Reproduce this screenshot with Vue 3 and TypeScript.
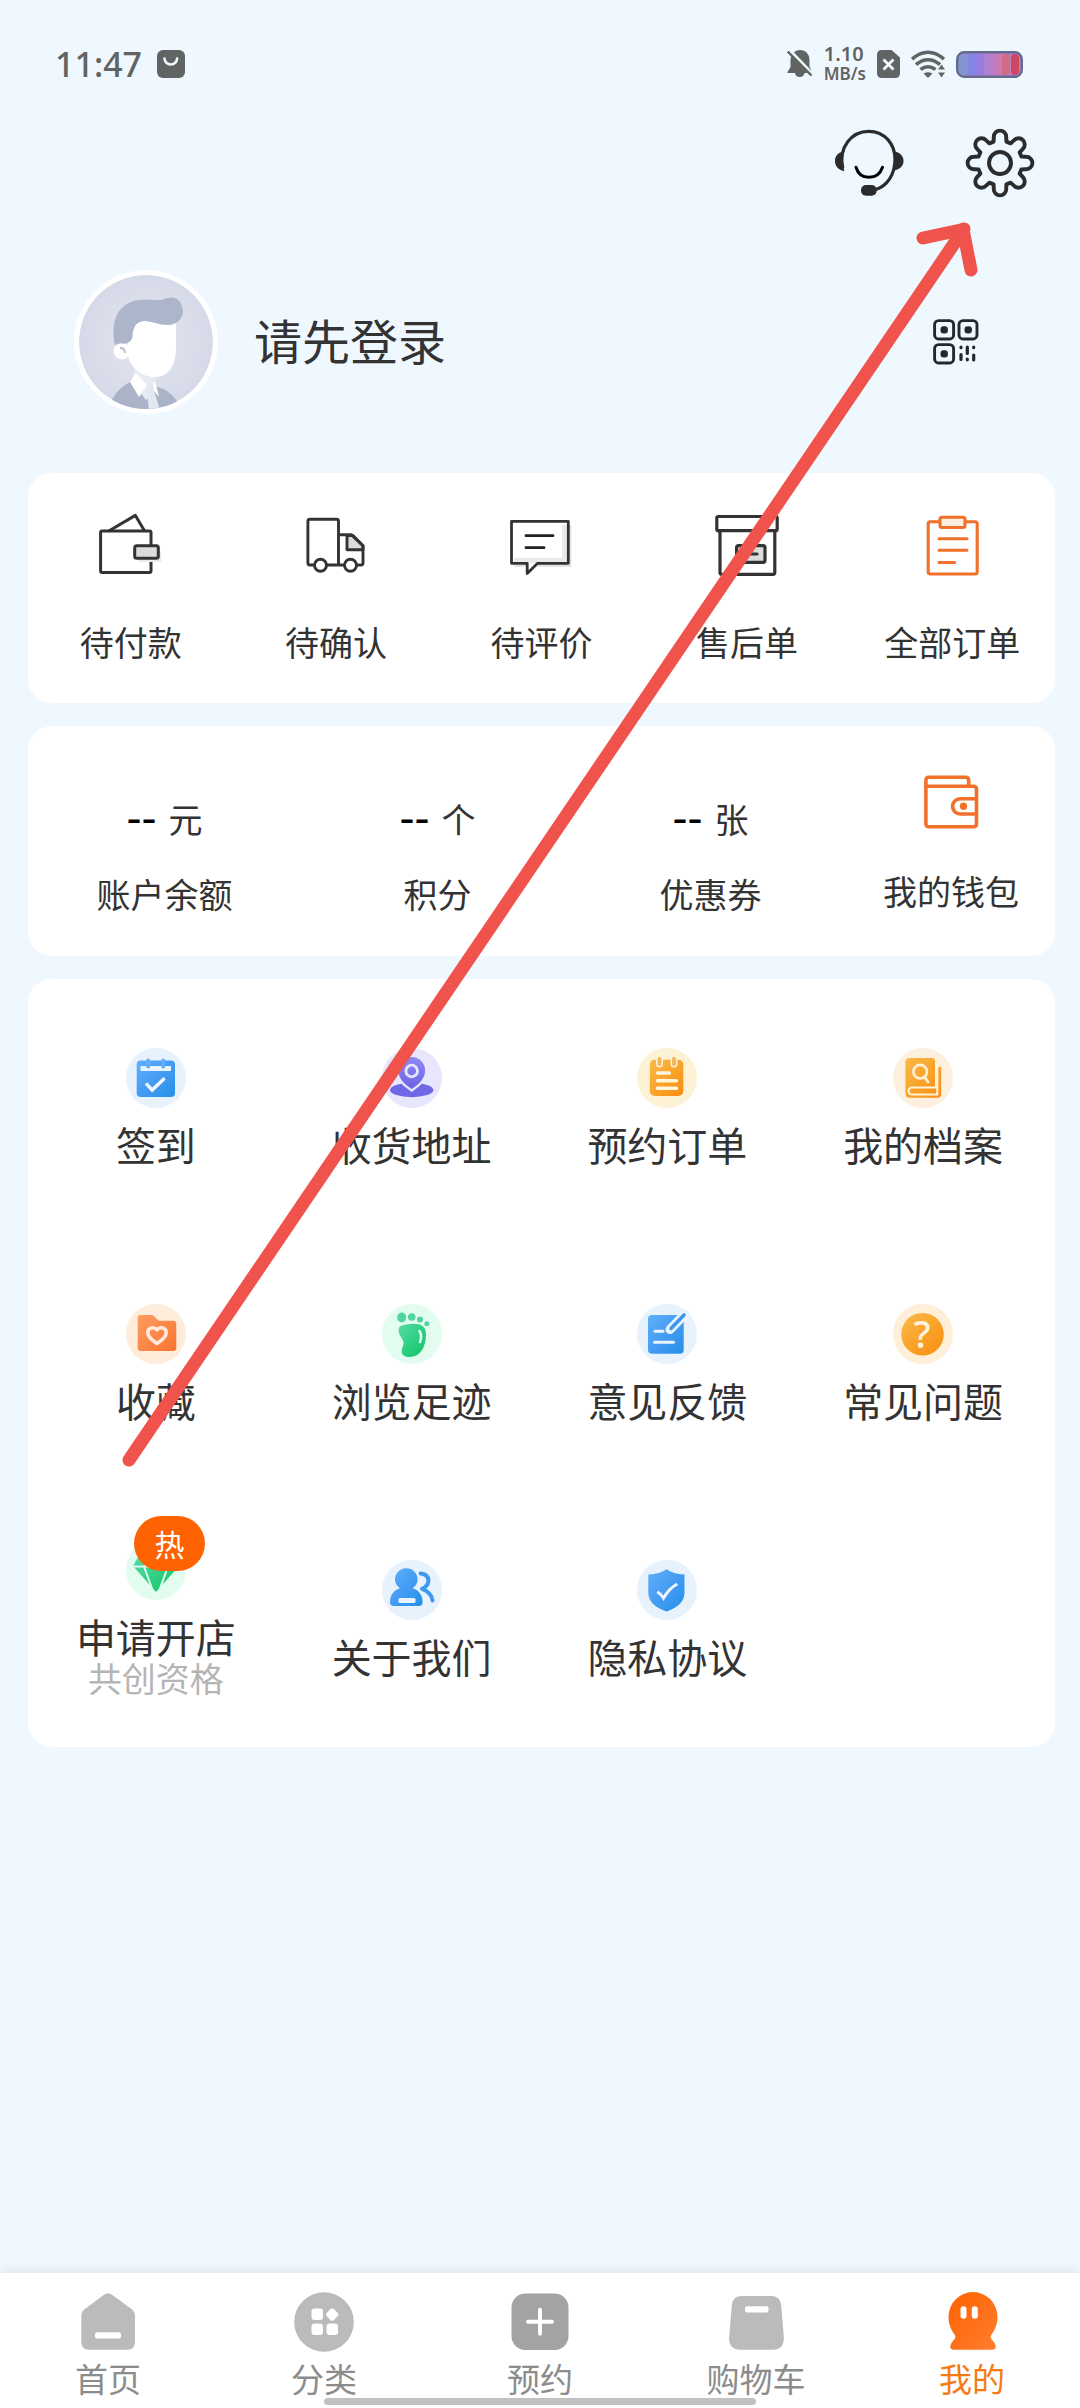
<script setup lang="ts">
interface Entry {
  label: string
  icon: string
  mark?: string
  note?: string
  badge?: string
}

interface Stat {
  unit: string
  label: string
}

const orders: Entry[] = [
  { label: '待付款', icon: 'pay' },
  { label: '待确认', icon: 'truck' },
  { label: '待评价', icon: 'comment' },
  { label: '售后单', icon: 'box' },
  { label: '全部订单', icon: 'clipboard' },
]

const stats: Stat[] = [
  { unit: '元', label: '账户余额' },
  { unit: '个', label: '积分' },
  { unit: '张', label: '优惠券' },
]

const services: Entry[] = [
  { label: '签到', icon: 'calendar' },
  { label: '收货地址', icon: 'pin' },
  { label: '预约订单', icon: 'notepad' },
  { label: '我的档案', icon: 'book' },
  { label: '收藏', icon: 'folder' },
  { label: '浏览足迹', icon: 'foot' },
  { label: '意见反馈', icon: 'feedback' },
  { label: '常见问题', icon: 'question', mark: '?' },
  { label: '申请开店', icon: 'diamond', note: '共创资格', badge: '热' },
  { label: '关于我们', icon: 'people' },
  { label: '隐私协议', icon: 'shield' },
]

const tabs: Entry[] = [
  { label: '首页', icon: 'home' },
  { label: '分类', icon: 'category' },
  { label: '预约', icon: 'plus' },
  { label: '购物车', icon: 'bag' },
  { label: '我的', icon: 'ghost' },
]

const activeTab = '我的'

// Outline of the settings gear: eight rounded lobes around the centre.
function gearPath(): string {
  const parts: string[] = []
  for (let i = 0; i < 8; i++) {
    const a = (i * Math.PI) / 4
    const at = (x: number, y: number): string =>
      `${(35 + x * Math.cos(a) - y * Math.sin(a)).toFixed(2)} ${(35 + x * Math.sin(a) + y * Math.cos(a)).toFixed(2)}`
    parts.push(`${i ? 'L' : 'M'}${at(-6.4, -21.4)}L${at(-6.2, -26.2)}A6.2 6.2 0 0 1 ${at(6.2, -26.2)}L${at(6.4, -21.4)}`)
  }
  return parts.join('') + 'Z'
}
const gear = gearPath()
</script>

<template>
  <div class="page">
    <svg class="sprite" aria-hidden="true">
      <defs>
        <linearGradient id="g-blue" x1="0" y1="0" x2="1" y2="1">
          <stop offset="0" stop-color="#5fb0fb" /><stop offset="0.5" stop-color="#459cf3" /><stop offset="1" stop-color="#2590e8" />
        </linearGradient>
        <linearGradient id="g-violet" x1="0" y1="0" x2="0" y2="1">
          <stop offset="0" stop-color="#9089f2" /><stop offset="1" stop-color="#6b63e4" />
        </linearGradient>
        <linearGradient id="g-amber" x1="0" y1="0" x2="1" y2="1">
          <stop offset="0" stop-color="#fcb84a" /><stop offset="0.5" stop-color="#f9a42a" /><stop offset="1" stop-color="#f98d12" />
        </linearGradient>
        <linearGradient id="g-orange" x1="0" y1="0" x2="1" y2="1">
          <stop offset="0" stop-color="#fd9d62" /><stop offset="1" stop-color="#fb7430" />
        </linearGradient>
        <linearGradient id="g-green" x1="0" y1="0" x2="1" y2="1">
          <stop offset="0" stop-color="#55dba4" /><stop offset="1" stop-color="#0cc464" />
        </linearGradient>
        <linearGradient id="g-me" x1="0" y1="0" x2="1" y2="1">
          <stop offset="0" stop-color="#ff6200" /><stop offset="1" stop-color="#ff7d30" />
        </linearGradient>
      </defs>

      <symbol id="i-pay" viewBox="0 0 64 64">
        <g fill="none" stroke="#333" stroke-width="3" stroke-linejoin="round">
          <rect x="1.600" y="18" width="50.400" height="41.400" rx="1.500" />
          <path d="M9.800 18 36.400 2.400 45.600 18" />
          <rect x="40" y="38" width="22" height="11" rx="1" fill="#e9e9e9" stroke="none" />
          <rect x="35.700" y="32.700" width="23.600" height="12.600" rx="2" fill="#dcdcdc" />
        </g>
      </symbol>
      <symbol id="i-truck" viewBox="0 0 64 64">
        <g fill="none" stroke="#333" stroke-width="2.900" stroke-linejoin="round">
          <path d="M43 22.500V36.700h16v-4L49 22.500z" fill="#dcdcdc" />
          <path d="M34.500 21.700H47.300L59 32.700V50q0 2-2 2H5.900q-2 0-2-2V8.300q0-2 2-2H32.500q2 0 2 2V52" />
          <circle cx="16.500" cy="52.300" r="6" fill="#fff" />
          <circle cx="46.500" cy="52.300" r="6" fill="#fff" />
        </g>
      </symbol>
      <symbol id="i-comment" viewBox="0 0 64 64">
        <path d="M59 12h2.500v42H27l2-3.500h30zM4 51.500h12V54H4z" fill="#e3e3e3" />
        <path d="M52 12h6v38H4v-5h48z" fill="#e9e9e9" />
        <path d="M1.500 8.300H58.300V50.300H27.600L17.200 60.500V50.300H1.500z" fill="none" stroke="#333" stroke-width="2.800" stroke-linejoin="round" />
        <path d="M16 22.700H43M16 34.700H34" fill="none" stroke="#222" stroke-width="2.800" stroke-linecap="round" />
      </symbol>
      <symbol id="i-box" viewBox="0 0 64 64">
        <g fill="none" stroke="#333" stroke-width="3.200" stroke-linejoin="round">
          <path d="M5 17.700V59.500q0 1.800 1.800 1.800H58q1.800 0 1.800-1.800V17.700" />
          <rect x="1.800" y="3.500" width="60.400" height="14.200" rx="1.500" />
          <rect x="21.600" y="32.700" width="28.400" height="16.600" rx="2" fill="#dcdcdc" />
          <path d="M28 41H42" stroke-linecap="round" />
        </g>
      </symbol>
      <symbol id="i-clipboard" viewBox="0 0 64 64">
        <g fill="none" stroke="#f1702a" stroke-width="3.100" stroke-linejoin="round" stroke-linecap="round">
          <rect x="8.200" y="8.700" width="49" height="52.300" rx="2" />
          <rect x="20" y="4.300" width="25" height="10.200" rx="2" fill="#fdeee2" />
          <path d="M19 25.700H47M19 37.300H47M19 49.500H34.600" />
        </g>
      </symbol>
      <symbol id="i-wallet" viewBox="0 0 64 64">
        <g fill="none" stroke="#f1702a" stroke-width="3.600" stroke-linejoin="round">
          <path d="M6.900 20.300V14.500q0-3.200 3.200-3.200H46.500q3.200 0 3.200 3.200V20.300" />
          <path d="M6.900 20.300H54.500q3 0 3 3V57.700q0 3-3 3H9.900q-3 0-3-3z" />
          <path d="M57.500 32.700H41.200a7.650 7.650 0 0 0 0 15.300H57.500" />
        </g>
        <circle cx="44.500" cy="40.300" r="3.700" fill="#f1702a" />
      </symbol>

      <symbol id="i-calendar" viewBox="0 0 60 60">
        <circle cx="30" cy="30" r="30" fill="#e7f2fd" />
        <rect x="10.700" y="12.500" width="38.300" height="36.500" rx="4" fill="url(#g-blue)" />
        <rect x="14.500" y="18" width="30.500" height="5" fill="#e9f4fe" />
        <path d="M22.200 12.500v6M37.300 12.500v6" stroke="#62aef8" stroke-width="4" stroke-linecap="round" />
        <path d="M20 35.300 26.200 42 38.600 30.300" fill="none" stroke="#f1f8ff" stroke-width="3.400" />
      </symbol>
      <symbol id="i-pin" viewBox="0 0 60 60">
        <circle cx="30" cy="30" r="30" fill="#e7e6fd" />
        <ellipse cx="29.700" cy="42" rx="21.700" ry="7.200" fill="#6f67e6" />
        <path d="M29.700 41C22 36 16.300 30 16.300 22.500a13.400 13.400 0 0 1 26.800 0C43.100 30 37.500 36 29.700 41z" fill="url(#g-violet)" stroke="#e7e6fd" stroke-width="5" paint-order="stroke" />
        <circle cx="29.700" cy="23" r="5.800" fill="none" stroke="#e7e6fd" stroke-width="2.800" />
      </symbol>
      <symbol id="i-notepad" viewBox="0 0 60 60">
        <circle cx="30" cy="30" r="30" fill="#fdf3d4" />
        <rect x="12.800" y="11.700" width="33.500" height="36.300" rx="5" fill="url(#g-amber)" />
        <path d="M22.500 11v5M37 11v5" stroke="#fdf3d4" stroke-width="7" stroke-linecap="round" />
        <path d="M22.500 11v5M37 11v5" stroke="#f5b55a" stroke-width="4" stroke-linecap="round" />
        <path d="M20.500 25H32.500M20.500 32.700H39.500M20.500 40.200H39.500" stroke="#fff6dc" stroke-width="3.400" stroke-linecap="round" />
      </symbol>
      <symbol id="i-book" viewBox="0 0 60 60">
        <circle cx="30" cy="30" r="30" fill="#fdf0dc" />
        <path d="M17 10H39q3 0 3 3V39H45V20a1.500 1.500 0 0 1 3.200 0V46q0 3.800-3.800 3.800H17q-4.600 0-4.600-4.600V14.500q0-4.500 4.600-4.500z" fill="url(#g-amber)" />
        <path d="M44.300 14V39.500H19a3.500 3.500 0 0 0 0 7H44.300V38" fill="none" stroke="#fff0d8" stroke-width="2.200" />
        <circle cx="27.200" cy="23.700" r="6.800" fill="none" stroke="#fff0d8" stroke-width="2.600" />
        <path d="M31.500 29 35 34" stroke="#fff0d8" stroke-width="2.800" stroke-linecap="round" />
      </symbol>
      <symbol id="i-folder" viewBox="0 0 60 60">
        <circle cx="30" cy="30" r="30" fill="#feeddb" />
        <path d="M14.500 11H25.500q1.500 0 2.500 1l4.500 4.700H47q3.300 0 3.300 3.300V44q0 3-3 3H14.700q-3 0-3-3V14q0-3 2.800-3z" fill="url(#g-orange)" />
        <path d="M31 39.500C25 35.500 21.800 32.500 21.800 28.700c0-5 6-6.500 9.200-2.800 3.200-3.700 9.200-2.200 9.200 2.800 0 3.800-3.200 6.800-9.200 10.800z" fill="none" stroke="#ffe9d8" stroke-width="3.600" stroke-linejoin="round" />
      </symbol>
      <symbol id="i-foot" viewBox="0 0 60 60">
        <circle cx="30" cy="30" r="30" fill="#e2fdf0" />
        <g fill="#4fd69e">
          <ellipse cx="19.700" cy="13.500" rx="4.500" ry="5" />
          <circle cx="29.700" cy="13" r="3.800" />
          <circle cx="38" cy="15.500" r="3" />
          <circle cx="44.800" cy="19.700" r="2.500" />
        </g>
        <path d="M16.600 26C16.600 21.500 21 20.500 29 20c9-.8 15 2 15 10 0 9-3 23-17 23-8 0-8.500-6-6-11 1.500-3.500 0-5.500-1.500-8-1.500-2.700-2.900-4.500-2.900-8z" fill="url(#g-green)" />
        <path d="M37.500 27q3 5 .5 11" fill="none" stroke="#e2fdf0" stroke-width="2.600" stroke-linecap="round" />
      </symbol>
      <symbol id="i-feedback" viewBox="0 0 60 60">
        <circle cx="30" cy="30" r="30" fill="#e7f2fd" />
        <rect x="11" y="11" width="35.700" height="38.800" rx="4" fill="url(#g-blue)" />
        <path d="M33 25.500 48 10" stroke="#e9f4fe" stroke-width="9" stroke-linecap="round" />
        <path d="M34 24.500 47 11" stroke="#3f97ee" stroke-width="3.600" stroke-linecap="round" />
        <path d="M18 27.300H26" stroke="#e9f4fe" stroke-width="3" stroke-linecap="round" />
        <path d="M17.500 38.200H36.500" stroke="#e9f4fe" stroke-width="3" stroke-linecap="round" />
      </symbol>
      <symbol id="i-question" viewBox="0 0 60 60">
        <circle cx="30" cy="30" r="30" fill="#feefd8" />
        <circle cx="29.500" cy="30.300" r="21.300" fill="url(#g-amber)" />
      </symbol>
      <symbol id="i-diamond" viewBox="0 0 60 60">
        <circle cx="30" cy="30" r="30" fill="#e2fdf0" />
        <path d="M12 17H48L53 26 30 52 7 26z" fill="url(#g-green)" />
        <path d="M6 26.500H54M18 26.500 26.500 50M42 26.500 33.500 50M18 26.500 24 17M42 26.500 36 17" fill="none" stroke="#e2fdf0" stroke-width="2" />
      </symbol>
      <symbol id="i-people" viewBox="0 0 60 60">
        <circle cx="30" cy="30" r="30" fill="#e7f2fd" />
        <path d="M8 42C8 34 13 29.500 18 28.200 14.500 26 13 22.500 13 19.500a11.300 11.300 0 0 1 22.600 0c0 3-1.500 6.500-5 8.700 5 1.300 10 5.800 10 13.800q0 4-3.600 4H11.600Q8 46 8 42z" fill="url(#g-blue)" />
        <rect x="16.500" y="38" width="17" height="5" rx="1.500" fill="#e9f4fe" />
        <path d="M38.500 13.500c10 1 10.500 11.500 1.500 15.300C47 31.500 50 35 50.500 40.500" fill="none" stroke="#3f99f0" stroke-width="4" stroke-linecap="round" stroke-linejoin="round" />
      </symbol>
      <symbol id="i-shield" viewBox="0 0 60 60">
        <circle cx="30" cy="30" r="30" fill="#e7f2fd" />
        <path d="M29.500 9.300Q36 14 47.500 14.500V33C47.500 43 38 48.500 29.500 51.500 21 48.500 11.300 43 11.300 33V14.500Q23 14 29.500 9.300z" fill="url(#g-blue)" />
        <path d="M20.300 31.700Q24 34 26.500 38 32 28.500 40.300 24" fill="none" stroke="#f1f8ff" stroke-width="3" />
      </symbol>

      <symbol id="i-home" viewBox="0 0 60 60">
        <path d="M26 2.800q4-3 8 0L53.500 17q3.500 2.600 3.500 7V49.700q0 8-8 8H11.300q-8 0-8-8V24q0-4.400 3.500-7z" fill="#bbb" />
        <rect x="17" y="40.300" width="26" height="6.200" rx="2" fill="#fff" />
      </symbol>
      <symbol id="i-category" viewBox="0 0 60 60">
        <circle cx="30" cy="30" r="29.800" fill="#bbb" />
        <g fill="#fff">
          <rect x="17.500" y="16.500" width="11.500" height="11.500" rx="3" />
          <rect x="17.500" y="31.500" width="11.500" height="11.500" rx="3" />
          <rect x="32.500" y="31.500" width="11.500" height="11.500" rx="3" />
          <rect x="33.200" y="17.500" width="10" height="10" rx="2" transform="rotate(45 38.200 22.500)" />
        </g>
      </symbol>
      <symbol id="i-plus" viewBox="0 0 60 60">
        <rect x="1.500" y="1.500" width="57" height="56.500" rx="14" fill="#a3a3a3" />
        <path d="M18 29.700H42M30 17.700V41.700" stroke="#fff" stroke-width="4" stroke-linecap="round" />
      </symbol>
      <symbol id="i-bag" viewBox="0 0 60 60">
        <path d="M16 4H45q9.300 0 10.200 9L57.800 45q.6 12.700-11 12.700H14.200Q2.600 57.700 3.200 45L5.800 13Q6.700 4 16 4z" fill="#bbb" />
        <rect x="19" y="14.300" width="23.500" height="6.200" rx="2" fill="#fff" />
      </symbol>
      <symbol id="i-ghost" viewBox="0 0 60 60">
        <path d="M31 0a24.500 25 0 0 1 24.500 25c0 8-3.500 14-6.300 18-1.100 1.600-.6 3 .6 4.500C55.500 54 54.500 57.700 50 57.700H12C7.500 57.700 6.500 54 12.200 47.500c1.200-1.500 1.700-2.900.6-4.500C10 39 6.500 33 6.500 25A24.500 25 0 0 1 31 0z" fill="url(#g-me)" />
        <path d="M21.500 17.300v6.400M32.800 17.300v6.400" stroke="#fff" stroke-width="6" stroke-linecap="round" />
      </symbol>
    </svg>

    <header class="status">
      <div class="status-side">
        <span class="clock">11:47</span>
        <svg width="28" height="28" viewBox="0 0 28 28">
          <rect width="28" height="28" rx="6" fill="#606463" />
          <path d="M7.500 8.500a6.300 6 0 0 0 12.600 0" fill="none" stroke="#f0f8ff" stroke-width="2.600" stroke-linecap="round" />
        </svg>
      </div>
      <div class="status-side tight">
        <svg width="26" height="28" viewBox="0 0 26 28">
          <path d="M3.500 9C4.500 3 9 0 13 0c6 0 9.500 4.500 9.500 10v6.500L25 22v1H17.500a4.800 4.800 0 0 1-9.500 0H.5v-1L3.500 17z" fill="#606463" />
          <path d="M2.500 0 26 24.500" stroke="#f0f8ff" stroke-width="3" />
          <path d="M.8 1.500 24.500 25.500" stroke="#606463" stroke-width="2.400" />
        </svg>
        <div class="speed"><span class="rate">1.10</span><span class="unit">MB/s</span></div>
        <svg width="23" height="28" viewBox="0 0 23 28">
          <path d="M5 0H14.500L23 7.500V23q0 5-5 5H5q-5 0-5-5V5Q0 0 5 0z" fill="#606463" />
          <path d="M6.500 9.500 16.500 19.500M16.500 9.500 6.500 19.500" stroke="#f0f8ff" stroke-width="2.800" />
        </svg>
        <svg width="34" height="28" viewBox="0 0 34 28">
          <g fill="none" stroke="#606463" stroke-width="3.600">
            <path d="M1 9Q17-4.500 33 9" /><path d="M5 14.500Q17 5 29 14.500" /><path d="M9.500 19.500Q17 14 24.500 19.500" />
          </g>
          <path d="M12.500 23.500Q17 21 21.500 23.500L17 28z" fill="#606463" />
          <path d="M27 19.500 30.500 14.500 34 19.500zM27 22.500 30.500 27.500 34 22.500z" fill="#606463" stroke="#f0f8ff" stroke-width="1.500" paint-order="stroke" />
        </svg>
        <svg width="67" height="27" viewBox="0 0 67 27">
          <rect x="1.200" y="1.200" width="64.600" height="24.600" rx="7" fill="#b47fc4" />
          <rect x="2" y="2.500" width="14" height="22" rx="5" fill="#8494cf" />
          <rect x="12" y="3" width="9" height="21" fill="#8384e4" />
          <rect x="20" y="3" width="9" height="21" rx="3" fill="#977de2" />
          <rect x="28" y="3" width="10" height="21" fill="#b17fcf" />
          <rect x="37" y="3" width="10" height="21" fill="#cb79b2" />
          <rect x="46" y="3" width="8" height="21" rx="3" fill="#cf6b84" />
          <rect x="55" y="3" width="8" height="21" rx="4" fill="#cf4660" />
          <rect x="1.200" y="1.200" width="64.600" height="24.600" rx="7" fill="none" stroke="#636b91" stroke-width="2.400" />
        </svg>
      </div>
    </header>

    <div class="actions">
      <button type="button" class="plain" aria-label="客服">
        <svg width="70" height="70" viewBox="0 0 70 70">
          <path d="M8.800 40C4 19 18 3.300 34.700 3.300S61 17 61 31C61 47 53 58 42 61.500" fill="none" stroke="#2a2c2d" stroke-width="3.200" />
          <path d="M9.500 23.500C3.500 24.500 1 28.500 1 33s2.500 8.500 9.300 10.200Q8 32 9.500 23.500z" fill="#2a2c2d" />
          <path d="M60.500 23.500c6 1 9 5 9 9.500s-3 8-9 9.500Q62.500 33 60.500 23.500z" fill="#2a2c2d" />
          <rect x="27" y="57" width="15.700" height="10.700" rx="5" fill="#2a2c2d" />
          <path d="M22 39.200Q25 49.300 35 49.300T48.500 39.200" fill="none" stroke="#000" stroke-width="3" stroke-linecap="round" />
        </svg>
      </button>
      <button type="button" class="plain" aria-label="设置">
        <svg width="70" height="70" viewBox="0 0 70 70">
          <path :d="gear" fill="none" stroke="#2a2c2d" stroke-width="3.900" stroke-linejoin="round" />
          <circle cx="35" cy="35" r="11" fill="none" stroke="#2a2c2d" stroke-width="3.900" />
        </svg>
      </button>
    </div>

    <section class="profile">
      <svg class="avatar" viewBox="0 0 144 144" aria-hidden="true">
        <defs>
          <radialGradient id="g-avatar"><stop offset="0" stop-color="#e3e6f1" /><stop offset="1" stop-color="#d6d9e7" /></radialGradient>
          <clipPath id="c-avatar"><circle cx="72" cy="72" r="67" /></clipPath>
        </defs>
        <circle cx="72" cy="72" r="72" fill="#fff" />
        <g clip-path="url(#c-avatar)">
          <circle cx="72" cy="72" r="67" fill="url(#g-avatar)" />
          <path d="M36 134Q42 119 56 112L84 117Q98 121 106 136V144H36z" fill="#abb3c8" />
          <path d="M60 100 82 106 82 120 72 130 58 112z" fill="#e9ebf4" />
          <path d="M62 103 56 112 65 127 73 115zM79 112 80 121 85 127 82 114z" fill="#fff" />
          <path d="M72 116 78 114 86 140H75z" fill="#e3e6f3" />
          <circle cx="48" cy="81" r="8.500" fill="#fff" />
          <path d="M46 78q5 0 5 5" fill="none" stroke="#b9bfd0" stroke-width="1.800" />
          <path d="M54 56Q66 44 102 52V78C102 97 93 107 81 107 67 107 56 97 54 85z" fill="#fff" />
          <path d="M41 75C36 53 43 32 66 30 80 29 86 32 93 28 104 25 109 34 109 42 108 50 102 55 94 55 84 55 78 51 70 51 60 52 59 60 58.500 66 58 72 53 73 50 74 47 73 44 74 41 75z" fill="#adb5cb" />
        </g>
      </svg>
      <button type="button" class="plain login">请先登录</button>
      <button type="button" class="plain qr" aria-label="二维码">
        <svg width="46" height="46" viewBox="0 0 46 46">
          <g fill="none" stroke="#24292d" stroke-width="2.900">
            <rect x="1.600" y="1.600" width="19" height="18.400" rx="4" />
            <rect x="26" y="1.600" width="18" height="18.400" rx="4" />
            <rect x="1.600" y="25.600" width="19" height="18.400" rx="4" />
            <path d="M28 28.200v.5M28 35.500v5M34.300 28v6.500M34.300 40v.8M40.700 28.200v.5M40.700 36v5" stroke-width="3.200" stroke-linecap="round" />
          </g>
          <g fill="#24292d">
            <rect x="7.500" y="7.200" width="7.400" height="7.200" rx="3" />
            <rect x="31.500" y="7.200" width="7.400" height="7.200" rx="3" />
            <rect x="7.500" y="31.200" width="7.400" height="7.200" rx="3" />
          </g>
        </svg>
      </button>
    </section>

    <main class="cards">
      <section class="card row">
        <a v-for="o in orders" :key="o.label" href="#" class="order">
          <svg class="order-icon" aria-hidden="true"><use :href="'#i-' + o.icon" /></svg>
          <span>{{ o.label }}</span>
        </a>
      </section>

      <section class="card row">
        <a v-for="s in stats" :key="s.label" href="#" class="stat">
          <span class="stat-value"><b>--</b><span>{{ s.unit }}</span></span>
          <span>{{ s.label }}</span>
        </a>
        <a href="#" class="wallet">
          <svg class="order-icon" aria-hidden="true"><use href="#i-wallet" /></svg>
          <span>我的钱包</span>
        </a>
      </section>

      <section class="card grid">
        <a v-for="s in services" :key="s.label" href="#" class="service">
          <span class="service-icon">
            <svg width="60" height="60" aria-hidden="true">
              <use :href="'#i-' + s.icon" />
              <text v-if="s.mark" class="mark" x="29" y="44" text-anchor="middle">{{ s.mark }}</text>
            </svg>
            <span v-if="s.badge" class="badge">{{ s.badge }}</span>
          </span>
          <span class="service-label">{{ s.label }}</span>
          <span v-if="s.note" class="service-note">{{ s.note }}</span>
        </a>
      </section>
    </main>

    <nav class="tabs">
      <a v-for="t in tabs" :key="t.label" href="#" class="tab" :class="{ active: t.label === activeTab }">
        <svg width="60" height="60" aria-hidden="true"><use :href="'#i-' + t.icon" /></svg>
        <span>{{ t.label }}</span>
      </a>
      <span class="home-bar"></span>
    </nav>

    <svg class="pointer" viewBox="0 0 1080 1480" aria-hidden="true">
      <g fill="none" stroke="#f0524c" stroke-width="13" stroke-linecap="round" stroke-linejoin="round">
        <path d="M129 1460 964 229" />
        <path d="M923 238 963 229.500 971 270" />
      </g>
    </svg>
  </div>
</template>

<style>
body {
  background: #f0f8ff;
}
</style>

<style scoped>
.page {
  position: relative;
  display: flex;
  flex-direction: column;
  min-height: 100vh;
  box-sizing: border-box;
  background: #f0f8ff;
  color: #333;
  font-family: "Noto Sans CJK SC", "Noto Sans", sans-serif;
  font-size: 34px;
  line-height: 42px;
}

.page svg {
  display: block;
  flex: none;
}

.page .sprite {
  position: absolute;
  width: 0;
  height: 0;
}

a {
  color: inherit;
  text-decoration: none;
}

.plain {
  padding: 0;
  border: 0;
  background: none;
  color: inherit;
  font: inherit;
  cursor: pointer;
}

.status {
  display: flex;
  justify-content: space-between;
  align-items: center;
  height: 128px;
  padding: 0 57px 0 55px;
  color: #606463;
  font-family: "Noto Sans", sans-serif;
  font-weight: 500;
}

.status-side {
  display: flex;
  align-items: center;
  gap: 15px;
}

.status-side.tight {
  gap: 11px;
}

.clock {
  font-size: 34px;
}

.speed {
  display: flex;
  flex-direction: column;
  font-weight: 600;
  line-height: 20px;
}

.rate {
  font-size: 20px;
}

.unit {
  font-size: 17px;
}

.actions {
  display: flex;
  justify-content: flex-end;
  gap: 61px;
  padding: 0 45px;
}

.profile {
  display: flex;
  align-items: center;
  margin: 72px 101px 59px 74px;
}

.avatar {
  width: 144px;
  height: 144px;
}

.login {
  margin-left: 36px;
  padding-bottom: 6px;
  font-size: 48px;
  line-height: 60px;
}

.qr {
  margin-left: auto;
}

.cards {
  display: flex;
  flex-direction: column;
  gap: 23px;
  padding: 0 25px 48px 28px;
}

.card {
  background: #fff;
  border-radius: 24px;
}

.row {
  display: flex;
  min-height: 230px;
}

.order,
.wallet {
  display: flex;
  flex-direction: column;
  align-items: center;
  gap: 44px;
  padding-top: 40px;
}

.order {
  flex: 1;
}

.wallet {
  width: 208px;
  gap: 40px;
}

.order-icon {
  width: 64px;
  height: 64px;
}

.stat {
  display: flex;
  flex: 1;
  flex-direction: column;
  align-items: center;
  gap: 33px;
  padding-top: 68px;
}

.stat-value {
  display: flex;
  align-items: baseline;
  gap: 12px;
}

.stat-value b {
  color: #000;
  font-size: 42px;
  font-weight: 500;
}

.grid {
  display: grid;
  grid-template-columns: repeat(4, 1fr);
  grid-auto-rows: 256px;
  padding-right: 4px;
}

.service {
  display: flex;
  flex-direction: column;
  align-items: center;
  justify-content: center;
}

.service-icon {
  position: relative;
  margin-bottom: 14px;
}

.service-label {
  font-size: 40px;
  line-height: 44px;
}

.service-note {
  color: #b5b5b5;
  line-height: 40px;
}

.mark {
  fill: #fff3df;
  font-family: "Noto Sans", sans-serif;
  font-size: 38px;
  font-weight: 500;
}

.badge {
  position: absolute;
  top: -24px;
  left: 8px;
  width: 71px;
  border-radius: 28px;
  background: #ff6200;
  color: #fff;
  font-size: 30px;
  line-height: 55px;
  text-align: center;
}

.tabs {
  position: relative;
  display: flex;
  height: 135px;
  margin-top: auto;
  background: #fff;
  box-shadow: 0 -2px 12px rgba(80, 90, 110, 0.12);
  color: #8c8c8c;
  font-size: 33px;
}

.tab {
  display: flex;
  flex: 1;
  flex-direction: column;
  align-items: center;
  gap: 5px;
  padding-top: 19px;
}

.tab.active {
  color: #f57c14;
}

.home-bar {
  position: absolute;
  bottom: 3px;
  left: 30%;
  width: 40%;
  height: 7px;
  border-radius: 4px;
  background: #c1c1c1;
}

.page .pointer {
  position: absolute;
  top: 0;
  left: 0;
  width: 100%;
  pointer-events: none;
}
</style>
